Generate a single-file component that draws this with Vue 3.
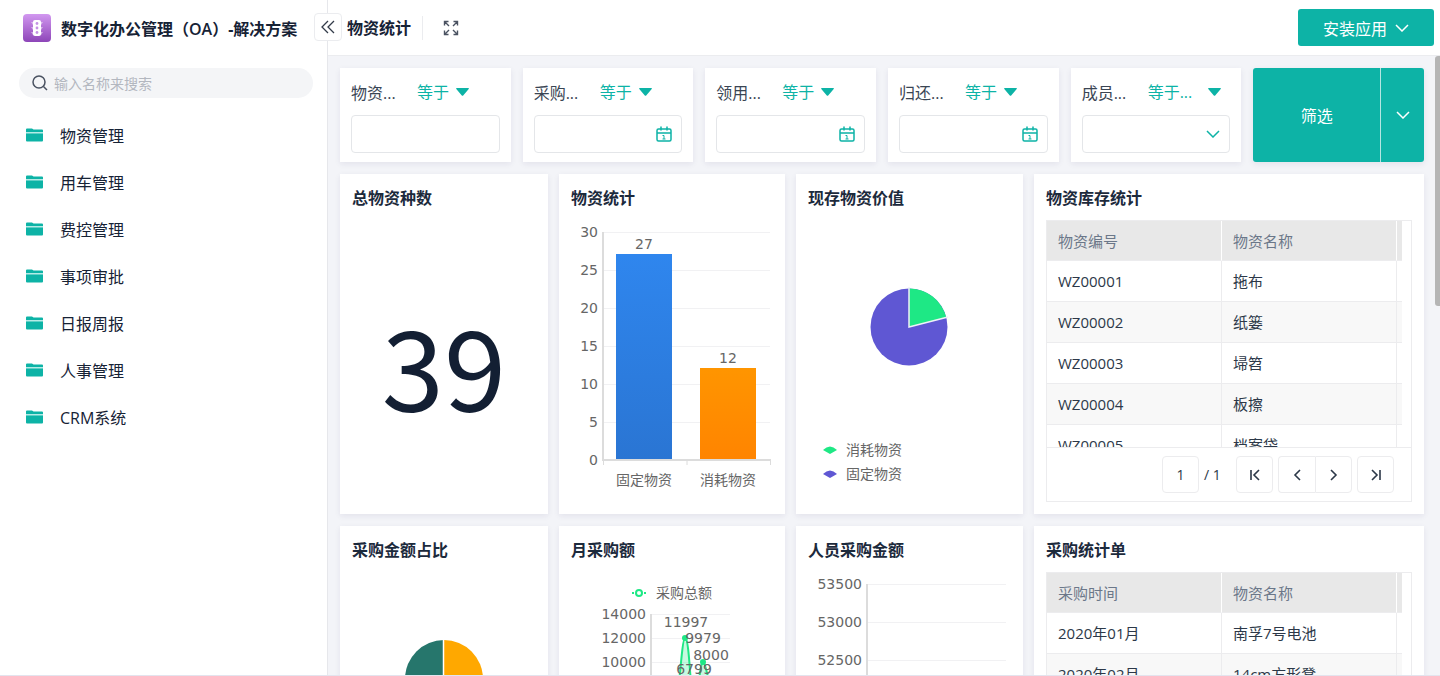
<script setup>
import { ref } from 'vue'

const menu = ['物资管理', '用车管理', '费控管理', '事项审批', '日报周报', '人事管理', 'CRM系统']

const filters = [
  { id: 'goods', label: '物资...', operator: '等于', type: 'text' },
  { id: 'buy', label: '采购...', operator: '等于', type: 'date' },
  { id: 'use', label: '领用...', operator: '等于', type: 'date' },
  { id: 'back', label: '归还...', operator: '等于', type: 'date' },
  { id: 'member', label: '成员...', operator: '等于...', type: 'select' },
]

const stock = [
  ['WZ00001', '拖布'],
  ['WZ00002', '纸篓'],
  ['WZ00003', '埽笤'],
  ['WZ00004', '板擦'],
  ['WZ00005', '档案袋'],
]

const purchases = [
  ['2020年01月', '南孚7号电池'],
  ['2020年02月', '14cm方形凳'],
]

const barTicks = [30, 25, 20, 15, 10, 5, 0].map((value, i) => ({ value, y: 20 + i * 38 }))
const monthTicks = [14000, 12000, 10000].map((value, i) => ({ value, y: 50 + i * 24 }))
const staffTicks = [53500, 53000, 52500].map((value, i) => ({ value, y: 20 + i * 38 }))

const keyword = ref('')
const page = ref('1')
</script>

<template>
  <div class="app">
    <aside class="sidebar">
      <div class="brand">
        <svg class="logo" viewBox="0 0 28 28" aria-hidden="true">
          <defs>
            <linearGradient id="logoFill" x1="0" y1="0" x2="0" y2="1">
              <stop offset="0" stop-color="#d298f0" />
              <stop offset="1" stop-color="#8d45b8" />
            </linearGradient>
          </defs>
          <rect width="28" height="28" rx="4" fill="url(#logoFill)" />
          <path d="M8 8h12l-2 3h-8zM8 13h12l-2 3h-8zM8 18h12l-2 3h-8z" fill="#fff" opacity=".5" />
          <rect x="10" y="6" width="8" height="16" rx="2" fill="#fff" />
          <g fill="#c592e4">
            <circle cx="14" cy="9.5" r="1.4" />
            <circle cx="14" cy="14" r="1.4" />
            <circle cx="14" cy="18.5" r="1.4" />
          </g>
        </svg>
        <h1>数字化办公管理（<span>OA</span>）-解决方案</h1>
      </div>
      <label class="search">
        <svg viewBox="0 0 16 16" aria-hidden="true">
          <circle cx="7" cy="7" r="6" />
          <path d="M11.5 11.5L15 15" />
        </svg>
        <input v-model="keyword" type="text" placeholder="输入名称来搜索" aria-label="输入名称来搜索" />
      </label>
      <nav>
        <a v-for="item in menu" :key="item" href="#">
          <svg viewBox="0 0 17 14" aria-hidden="true">
            <path d="M0 4V1.500Q0 .5 1 .5h5l1.500 1H16q1 0 1 1V4z" />
            <path d="M0 5h17v7.500q0 1-1 1H1q-1 0-1-1z" />
            <path d="M0 4h17v1.500H0z" fill="#b5ebe6" />
          </svg>
          {{ item }}
        </a>
      </nav>
      <button class="collapse" type="button" aria-label="收起菜单">
        <svg viewBox="0 0 14 14"><path d="M7 1L1 7l6 6M13 1L7 7l6 6" /></svg>
      </button>
    </aside>

    <div class="content">
      <header class="topbar">
        <h2>物资统计</h2>
        <button class="expand" type="button" aria-label="全屏">
          <svg viewBox="0 0 16 16">
            <path d="M5.500 1.500h-4v4M1.500 1.500l4.500 4.500M10.500 1.500h4v4M14.500 1.500L10 6M5.500 14.500h-4v-4M1.500 14.500L6 10M10.500 14.500h4v-4M14.500 14.500L10 10" />
          </svg>
        </button>
        <button class="install" type="button">
          安装应用
          <svg viewBox="0 0 14 8"><path d="M1 1l6 6 6-6" /></svg>
        </button>
      </header>

      <main class="board">
        <form class="filters" @submit.prevent>
          <div v-for="f in filters" :key="f.id" class="card filter">
            <div class="condition">
              <label class="name" :for="f.id">{{ f.label }}</label>
              <select :aria-label="f.label + '条件'">
                <option>{{ f.operator }}</option>
              </select>
              <svg viewBox="0 0 13 8" aria-hidden="true" :class="{ far: f.type === 'select' }">
                <path d="M.5 0h12q.8.300 0 1.200L7.200 7.500q-.7.600-1.400 0L.5 1.200Q-.2.300.5 0z" />
              </svg>
            </div>
            <div class="field">
              <select v-if="f.type === 'select'" :id="f.id"><option></option></select>
              <input v-else :id="f.id" type="text" />
              <svg v-if="f.type === 'date'" class="calendar" viewBox="0 0 16 16" aria-hidden="true">
                <rect x="1" y="3" width="14" height="12" rx="1.500" />
                <path d="M1 7h14M5 .5v4M11 .5v4" />
                <path d="M6.500 9.500H8V13M6.500 13h3" stroke-width="1" />
              </svg>
              <svg v-if="f.type === 'select'" class="arrow" viewBox="0 0 14 8" aria-hidden="true">
                <path d="M1 1l6 6 6-6" />
              </svg>
            </div>
          </div>
          <div class="split">
            <button type="submit">筛选</button>
            <button class="more" type="button" aria-label="更多">
              <svg viewBox="0 0 14 8"><path d="M1 1l6 6 6-6" /></svg>
            </button>
          </div>
        </form>

        <div class="widgets">
          <section class="card widget">
            <h3>总物资种数</h3>
            <div class="total">39</div>
          </section>

          <section class="card widget">
            <h3>物资统计</h3>
            <svg class="chart" viewBox="0 0 226 302">
              <defs>
                <linearGradient id="blueBar" x1="0" y1="0" x2="0" y2="1">
                  <stop offset="0" stop-color="#2f86ee" />
                  <stop offset="1" stop-color="#2a75d3" />
                </linearGradient>
                <linearGradient id="orangeBar" x1="0" y1="0" x2="0" y2="1">
                  <stop offset="0" stop-color="#ff9500" />
                  <stop offset="1" stop-color="#ff8400" />
                </linearGradient>
              </defs>
              <g v-for="t in barTicks" :key="t.value">
                <path v-if="t.value" class="grid" :d="`M44 ${t.y + 0.5}h167`" />
                <text x="39" :y="t.y + 5" text-anchor="end">{{ t.value }}</text>
              </g>
              <rect x="57" y="42" width="56" height="206" fill="url(#blueBar)" />
              <rect x="141" y="156" width="56" height="92" fill="url(#orangeBar)" />
              <path class="axis" d="M44 20v228M43 248h169" />
              <path class="tick" d="M44.500 249v4M128 249v4M211.500 249v4" />
              <text x="85" y="37" text-anchor="middle">27</text>
              <text x="169" y="151" text-anchor="middle">12</text>
              <text x="85" y="273" text-anchor="middle">固定物资</text>
              <text x="169" y="273" text-anchor="middle">消耗物资</text>
            </svg>
          </section>

          <section class="card widget">
            <h3>现存物资价值</h3>
            <svg class="chart" viewBox="0 0 227 302">
              <circle cx="113" cy="115" r="38.500" fill="#5f57d3" />
              <path d="M113 115V76.500a38.500 38.500 0 0 1 37.300 29z" fill="#1ee885" />
              <path d="M113 75v40l39-10" fill="none" stroke="#f0f1f8" stroke-width="1.500" />
              <path d="M27 238q7-7 14 0l-7 4z" fill="#1ee885" />
              <path d="M27 262q7-7 14 0l-7 4z" fill="#5f57d3" />
              <text x="50" y="243">消耗物资</text>
              <text x="50" y="267">固定物资</text>
            </svg>
          </section>

          <section class="card widget">
            <h3>物资库存统计</h3>
            <div class="sheet">
              <div class="rows">
                <table>
                  <colgroup><col /><col /><col class="rest" /></colgroup>
                  <thead>
                    <tr><th>物资编号</th><th>物资名称</th><th></th></tr>
                  </thead>
                  <tbody>
                    <tr v-for="row in stock" :key="row[0]">
                      <td>{{ row[0] }}</td><td>{{ row[1] }}</td><td></td>
                    </tr>
                  </tbody>
                </table>
              </div>
              <div class="pager">
                <input v-model="page" type="text" aria-label="页码" />
                <span>/ 1</span>
                <button type="button" aria-label="首页">
                  <svg viewBox="0 0 12 14"><path d="M2 2v10M10 2L5 7l5 5" /></svg>
                </button>
                <div class="pair">
                  <button type="button" aria-label="上一页">
                    <svg viewBox="0 0 12 14"><path d="M9 2L4 7l5 5" /></svg>
                  </button>
                  <button type="button" aria-label="下一页">
                    <svg viewBox="0 0 12 14"><path d="M3 2l5 5-5 5" /></svg>
                  </button>
                </div>
                <button type="button" aria-label="末页">
                  <svg viewBox="0 0 12 14"><path d="M10 2v10M2 2l5 5-5 5" /></svg>
                </button>
              </div>
            </div>
          </section>

          <section class="card widget">
            <h3>采购金额占比</h3>
            <svg class="chart" viewBox="0 0 208 302">
              <path d="M104 76a39 39 0 0 1 0 78z" fill="#ffa800" />
              <path d="M104 76a39 39 0 0 0 0 78z" fill="#26766c" />
              <path d="M103.500 75v80" stroke="#fff" stroke-width="1.500" />
            </svg>
          </section>

          <section class="card widget">
            <h3>月采购额</h3>
            <svg class="chart" viewBox="0 0 226 302">
              <g v-for="t in monthTicks" :key="t.value">
                <path class="grid" :d="`M92 ${t.y + 0.5}h79`" />
                <text x="87" :y="t.y + 5" text-anchor="end">{{ t.value }}</text>
              </g>
              <path class="axis" d="M92 50v168" />
              <path
                d="M101 216C117 214 121 74 126 74S131 135 135 135S141 98 144 98S149 121 153 121S160 210 166 216z"
                fill="#1ee885" fill-opacity=".25"
              />
              <path
                d="M101 216C117 214 121 74 126 74S131 135 135 135S141 98 144 98S149 121 153 121S160 210 166 216"
                fill="none" stroke="#1ee885" stroke-width="2"
              />
              <circle cx="126" cy="74" r="3" fill="#1ee885" />
              <circle cx="144" cy="98" r="3" fill="#1ee885" />
              <path d="M73 29h2M85 29h2" stroke="#1ee885" stroke-width="2" />
              <circle cx="80" cy="29" r="3" fill="#fff" stroke="#1ee885" stroke-width="2" />
              <text x="97" y="34">采购总额</text>
              <text x="127" y="63" text-anchor="middle">11997</text>
              <text x="144" y="79" text-anchor="middle">9979</text>
              <text x="152" y="96" text-anchor="middle">8000</text>
              <text x="135" y="110" text-anchor="middle">6799</text>
            </svg>
          </section>

          <section class="card widget">
            <h3>人员采购金额</h3>
            <svg class="chart" viewBox="0 0 227 302">
              <g v-for="t in staffTicks" :key="t.value">
                <path class="grid" :d="`M71 ${t.y + 0.5}h139`" />
                <text x="66" :y="t.y + 5" text-anchor="end">{{ t.value }}</text>
              </g>
              <path class="axis" d="M71 20v228" />
            </svg>
          </section>

          <section class="card widget">
            <h3>采购统计单</h3>
            <div class="sheet">
              <div class="rows">
                <table>
                  <colgroup><col /><col /><col class="rest" /></colgroup>
                  <thead>
                    <tr><th>采购时间</th><th>物资名称</th><th></th></tr>
                  </thead>
                  <tbody>
                    <tr v-for="row in purchases" :key="row[0]">
                      <td>{{ row[0] }}</td><td>{{ row[1] }}</td><td></td>
                    </tr>
                  </tbody>
                </table>
              </div>
            </div>
          </section>
        </div>
        <div class="thumb"></div>
      </main>
    </div>
  </div>
</template>

<style>
body {
  margin: 0;
  overflow: hidden;
}
</style>

<style scoped>
.app {
  box-sizing: border-box;
  display: flex;
  height: 100vh;
  border-bottom: 1px solid #e3e4ee;
  background: #fff;
  color: #162235;
  font-family: 'Open Sans', 'Noto Sans CJK SC', sans-serif;
  font-size: 16px;
}
.app * {
  box-sizing: border-box;
}
h1,
h2,
h3 {
  margin: 0;
  font-weight: 700;
}
button,
input,
select {
  margin: 0;
  padding: 0;
  border: 0;
  border-radius: 0;
  outline: 0;
  background: none;
  color: inherit;
  font: inherit;
  appearance: none;
}
svg {
  display: block;
  flex: none;
}

.sidebar {
  position: relative;
  z-index: 1;
  flex: none;
  width: 328px;
  border-right: 1px solid #e6e7eb;
  background: #fff;
}
.brand {
  display: flex;
  align-items: center;
  gap: 10px;
  height: 55px;
  padding-left: 23px;
}
.logo {
  width: 28px;
  height: 28px;
}
.brand h1 {
  font-size: 16px;
  white-space: nowrap;
}
.brand span {
  font-weight: 600;
}
.search {
  display: flex;
  align-items: center;
  gap: 6px;
  height: 30px;
  margin: 13px 14px 13px 19px;
  padding: 0 13px;
  border-radius: 15px;
  background: #f4f5f7;
}
.search svg {
  width: 16px;
  height: 16px;
  fill: none;
  stroke: #4a5261;
  stroke-width: 1.5;
}
.search input {
  flex: 1;
  min-width: 0;
  font-size: 14px;
}
.search input::placeholder {
  color: #b3b7bf;
  opacity: 1;
}
nav a {
  display: flex;
  align-items: center;
  gap: 17px;
  height: 47px;
  padding-left: 26px;
  color: #162235;
  text-decoration: none;
  font-size: 16px;
}
nav svg {
  width: 17px;
  height: 14px;
  fill: #0db3a6;
}
.collapse {
  position: absolute;
  top: 13px;
  right: -15px;
  display: grid;
  place-items: center;
  width: 28px;
  height: 28px;
  border: 1px solid #ebecef;
  border-radius: 4px;
  background: #fff;
}
.collapse svg {
  width: 14px;
  height: 14px;
  fill: none;
  stroke: #333b49;
  stroke-width: 1.3;
}

.content {
  display: flex;
  flex: 1;
  flex-direction: column;
  min-width: 0;
}
.topbar {
  display: flex;
  flex: none;
  align-items: center;
  height: 56px;
  padding: 0 6px 0 19px;
  border-bottom: 1px solid #ebecef;
}
.topbar h2 {
  padding-right: 11px;
  border-right: 1px solid #ebecef;
  font-size: 16px;
  line-height: 24px;
}
.expand {
  padding: 0 20px;
}
.expand svg {
  width: 16px;
  height: 16px;
  fill: none;
  stroke: #4a5261;
  stroke-width: 1.4;
}
.install {
  display: flex;
  align-items: center;
  justify-content: center;
  gap: 8px;
  width: 136px;
  height: 37px;
  margin-left: auto;
  border-radius: 3px;
  background: #0db3a6;
  color: #fff;
}
.install svg,
.more svg,
.arrow {
  width: 14px;
  height: 8px;
  fill: none;
  stroke: currentColor;
  stroke-width: 1.5;
}

.board {
  position: relative;
  flex: 1;
  min-height: 0;
  padding: 12px 16px 0 12px;
  overflow: hidden;
  background: #f3f4f8;
}
.thumb {
  position: absolute;
  top: 0;
  right: 0;
  width: 5px;
  height: 250px;
  border-radius: 3px 0 0 3px;
  background: #b5b5b5;
}
.card {
  min-width: 0;
  background: #fff;
  box-shadow: 0 2px 6px rgba(40, 30, 90, 0.08);
}
.filters {
  display: grid;
  grid-template-columns: repeat(6, 1fr);
  gap: 12px;
  margin-bottom: 12px;
}
.filter {
  height: 94px;
  padding: 12px 11px;
}
.condition {
  display: flex;
  align-items: center;
  height: 24px;
  margin-bottom: 11px;
  color: #3a4554;
}
.name {
  width: 66px;
}
.condition select {
  color: #0db3a6;
}
.condition svg {
  width: 13px;
  height: 8px;
  margin-left: 6px;
  fill: #0db3a6;
}
.condition svg.far {
  margin-left: auto;
  margin-right: 9px;
}
.field {
  display: flex;
  align-items: center;
  height: 38px;
  padding: 0 9px;
  border: 1px solid #e4e6e9;
  border-radius: 4px;
  color: #0db3a6;
}
.field input,
.field select {
  flex: 1;
  width: 0;
  min-width: 0;
}
.calendar {
  width: 16px;
  height: 16px;
  fill: none;
  stroke: #0db3a6;
  stroke-width: 1.5;
}
.split {
  display: flex;
  overflow: hidden;
  border-radius: 3px;
  background: #0db3a6;
  box-shadow: 0 2px 6px rgba(40, 30, 90, 0.08);
  color: #fff;
}
.split button {
  flex: 1;
}
.split .more {
  display: grid;
  flex: none;
  place-items: center;
  width: 44px;
  border-left: 1px solid #b4e6e2;
}

.widgets {
  display: grid;
  grid-template-columns: 208fr 226fr 227fr 390fr;
  gap: 12px 11px;
}
.widget {
  display: flex;
  flex-direction: column;
  height: 340px;
}
.widget h3 {
  flex: none;
  height: 38px;
  padding: 12px 12px 0;
  color: #1c2a3c;
  font-size: 16px;
  line-height: 24px;
}
.total {
  display: grid;
  flex: 1;
  place-items: center;
  color: #131f33;
  font-family: 'Noto Sans CJK SC', sans-serif;
  font-size: 112px;
  line-height: 302px;
}
.chart {
  width: 100%;
  height: 302px;
}
.chart text {
  fill: #666;
  font-family: 'DejaVu Sans', 'Noto Sans CJK SC', sans-serif;
  font-size: 14px;
}
.grid {
  stroke: #f1f1f3;
}
.axis {
  fill: none;
  stroke: #dcdcdc;
  stroke-width: 2;
}
.tick {
  stroke: #dcdcdc;
}

.sheet {
  display: flex;
  flex: 1;
  flex-direction: column;
  min-height: 0;
  margin: 8px 12px 12px;
  border: 1px solid #ececee;
}
.rows {
  flex: 1;
  min-height: 0;
  padding-right: 9px;
  overflow: hidden;
}
table {
  width: 100%;
  table-layout: fixed;
  border-collapse: separate;
  border-spacing: 0;
  color: #2c3848;
  font-size: 15px;
}
.rest {
  width: 5px;
}
th,
td {
  height: 41px;
  padding: 0 11px;
  border-right: 1px solid #ececee;
  border-bottom: 1px solid #ececee;
  font-weight: 400;
  line-height: 20px;
  text-align: left;
  white-space: nowrap;
}
th {
  height: 40px;
  border-right-color: #fff;
  background: #e8e8e8;
  color: #6b7789;
}
th:last-child,
td:last-child {
  padding: 0;
  border-right: 0;
}
tbody tr:nth-child(even) {
  background: #f8f8f8;
}
.pager {
  display: flex;
  flex: none;
  align-items: center;
  justify-content: flex-end;
  gap: 5px;
  height: 54px;
  padding-right: 17px;
  border-top: 1px solid #ececee;
  color: #2c3848;
  font-size: 14px;
}
.pager input,
.pager button {
  width: 37px;
  height: 37px;
  border: 1px solid #ececee;
  border-radius: 4px;
  text-align: center;
}
.pager button {
  display: grid;
  place-items: center;
}
.pager span {
  width: 27px;
}
.pair {
  display: flex;
}
.pair button:first-child {
  border-right: 0;
  border-radius: 4px 0 0 4px;
}
.pair button:last-child {
  border-radius: 0 4px 4px 0;
}
.pager svg {
  width: 12px;
  height: 14px;
  fill: none;
  stroke: #2c3848;
  stroke-width: 1.6;
}
</style>
